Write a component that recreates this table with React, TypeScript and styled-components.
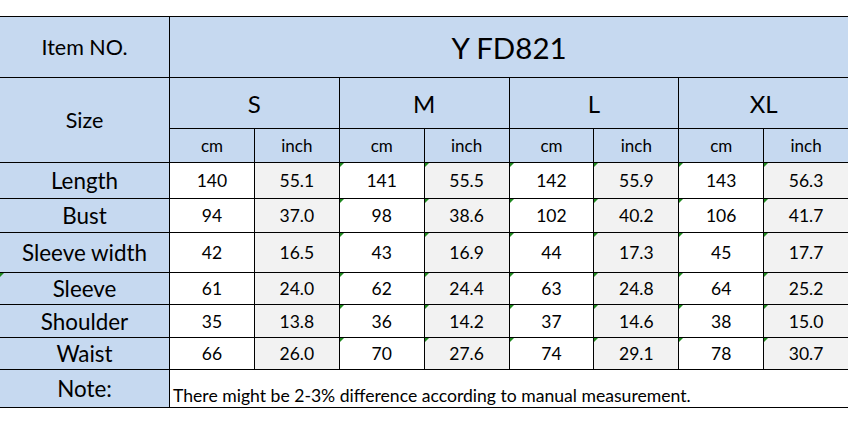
import React from "react";
import styled, { createGlobalStyle, css } from "styled-components";

const GlobalStyle = createGlobalStyle`
  html, body {
    margin: 0;
    padding: 0;
    background: #ffffff;
    overflow: hidden;
  }
  body {
    font-family: Lato, "Open Sans", sans-serif;
    color: #000000;
  }
`;

const Page = styled.div`
  width: 848px;
  height: 421px;
  padding-top: 16px;
  box-sizing: border-box;
`;

const Sheet = styled.div`
  display: grid;
  width: 848px;
  grid-template-columns: 169px repeat(8, 1fr);
  grid-template-rows: 60px 50px 33px 35px 33px 39px 31px 32px 31px 37px;
  gap: 1px;
  background: #000000;
  border-top: 1px solid #000000;
  border-bottom: 1px solid #000000;
`;

type CellProps = {
  $bg?: "blue" | "white" | "gray";
  $size?: number;
  $span?: number;
  $rows?: number;
  $flag?: boolean;
};

const bgColors = {
  blue: "#c6d9f0",
  white: "#ffffff",
  gray: "#f2f2f2",
};

const Cell = styled.div<CellProps>`
  position: relative;
  display: flex;
  align-items: center;
  justify-content: center;
  background: ${(p) => bgColors[p.$bg || "white"]};
  font-size: ${(p) => p.$size || 17.5}px;
  white-space: nowrap;
  grid-column: span ${(p) => p.$span || 1};
  grid-row: span ${(p) => p.$rows || 1};
  ${(p) =>
    p.$flag &&
    css`
      &::before {
        content: "";
        position: absolute;
        left: 0;
        top: 0;
        border-top: 4px solid #1f8a1f;
        border-right: 4px solid transparent;
      }
    `}
`;

const NoteText = styled(Cell)`
  justify-content: flex-start;
  align-items: flex-end;
  padding: 0 0 1px 3px;
  font-size: 17.6px;
`;

const sizes = ["S", "M", "L", "XL"];

const rows: { label: string; values: string[]; flag?: boolean }[] = [
  { label: "Length", values: ["140", "55.1", "141", "55.5", "142", "55.9", "143", "56.3"] },
  { label: "Bust", values: ["94", "37.0", "98", "38.6", "102", "40.2", "106", "41.7"] },
  { label: "Sleeve width", values: ["42", "16.5", "43", "16.9", "44", "17.3", "45", "17.7"] },
  { label: "Sleeve", values: ["61", "24.0", "62", "24.4", "63", "24.8", "64", "25.2"], flag: true },
  { label: "Shoulder", values: ["35", "13.8", "36", "14.2", "37", "14.6", "38", "15.0"] },
  { label: "Waist", values: ["66", "26.0", "70", "27.6", "74", "29.1", "78", "30.7"] },
];

export default function App() {
  return (
    <Page>
      <GlobalStyle />
      <Sheet>
        <Cell $bg="blue" $size={21.5}>Item NO.</Cell>
        <Cell $bg="blue" $size={29.5} $span={8}>Y FD821</Cell>

        <Cell $bg="blue" $size={21.5} $rows={2}>Size</Cell>
        {sizes.map((s) => (
          <Cell key={s} $bg="blue" $size={24} $span={2}>{s}</Cell>
        ))}
        {sizes.map((s) => (
          <React.Fragment key={s}>
            <Cell $bg="blue" $size={17}>cm</Cell>
            <Cell $bg="blue" $size={17}>inch</Cell>
          </React.Fragment>
        ))}

        {rows.map((r) => (
          <React.Fragment key={r.label}>
            <Cell $bg="blue" $size={22.4} $flag={r.flag}>{r.label}</Cell>
            {r.values.map((v, i) => (
              <Cell key={i} $bg={i % 2 ? "gray" : "white"} $flag={i >= 2}>
                {v}
              </Cell>
            ))}
          </React.Fragment>
        ))}

        <Cell $bg="blue" $size={22.4}>Note:</Cell>
        <NoteText $span={8}>
          There might be 2-3% difference according to manual measurement.
        </NoteText>
      </Sheet>
    </Page>
  );
}
